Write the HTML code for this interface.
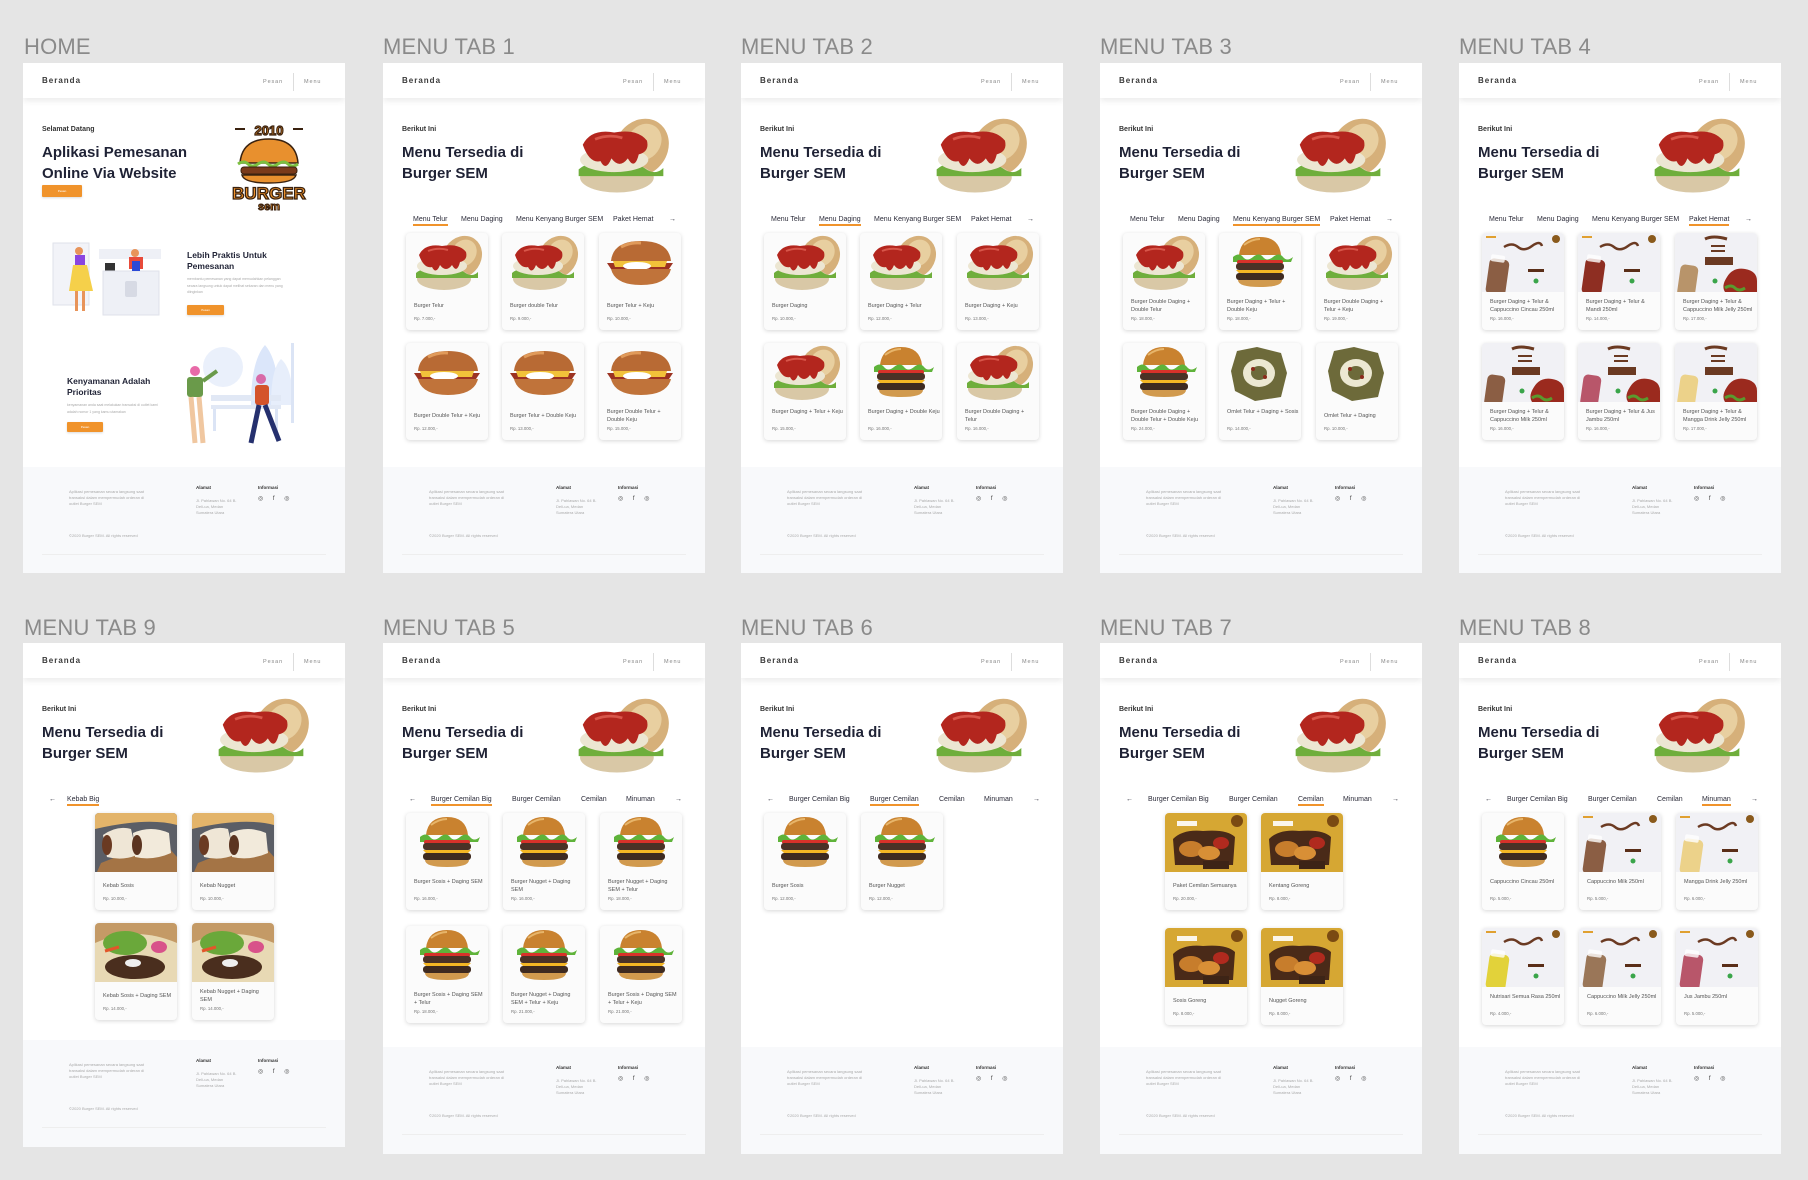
<!DOCTYPE html>
<html><head><meta charset="utf-8"><style>
*{box-sizing:border-box}
body{margin:0;width:1808px;height:1180px;background:#e5e5e5;position:relative;overflow:hidden;font-family:"Liberation Sans",sans-serif}
.t{position:absolute;font-size:22px;color:#8a8a8a;line-height:22px;letter-spacing:.2px}
.f{position:absolute;width:322px;height:510px;background:#fff;overflow:hidden}
.f *{position:absolute;margin:0}
.hdr{left:0;top:0;width:322px;height:35px;background:#fff;box-shadow:0 3px 6px rgba(0,0,0,.08);z-index:2}
.br{left:19px;top:13px;font-size:8px;font-weight:bold;letter-spacing:1px;color:#3a3a3a}
.ps{left:240px;top:16px;font-size:5.5px;letter-spacing:.9px;color:#888}
.dv{left:270px;top:10px;width:1px;height:18px;background:#ddd}
.mn{left:281px;top:16px;font-size:5.5px;letter-spacing:.9px;color:#888}
.sub{left:19px;top:63px;font-size:7px;font-weight:bold;color:#333}
.h1{left:19px;top:79px;font-size:15px;font-weight:bold;line-height:21px;color:#1f2235;white-space:nowrap}
.hero{left:182px;top:48px;width:112px;height:88px}
.tb{top:153px;font-size:7px;color:#2c2c3a;white-space:nowrap}
.on{border-bottom:2px solid #f0932b;padding-bottom:1px}
.c{width:82px;height:97px;background:#fbfbfb;border-radius:4px;box-shadow:0 1px 4px rgba(0,0,0,.16);overflow:hidden}
.c svg{left:0;top:0;width:82px;height:59px}
.c .n{position:absolute;left:8px;top:66px;width:72px;font-size:5.5px;line-height:7.5px;color:#555}
.c .p{position:absolute;left:8px;top:83px;font-size:4.3px;color:#777}
.c .n.one{top:70px}
.ft{left:0;top:404px;width:322px;height:120px;background:#f8f9fb}
.ft p{font-size:4px;color:#aaa;line-height:6px}
.fd{left:46px;top:22px;width:84px}
.fa{left:173px;top:18px;font-size:4.5px !important;font-weight:bold;color:#333 !important}
.fi{left:235px;top:18px;font-size:4.5px !important;font-weight:bold;color:#333 !important}
.ic{left:235px;top:28px;font-size:6px;color:#444;letter-spacing:4px;white-space:nowrap}
.fl{left:19px;top:87px;width:284px;height:1px;background:#eee}
.btn{background:#f0932b;border-radius:1px;box-shadow:0 1px 2px rgba(0,0,0,.15);color:#fff;font-size:3px;text-align:center;line-height:12px}
</style></head><body>
<svg width="0" height="0" style="position:absolute">
<defs>
<symbol id="s1" viewBox="0 0 82 59">
<ellipse cx="56" cy="24" rx="19" ry="22" fill="#d6b07a" transform="rotate(35 56 24)"/>
<ellipse cx="58" cy="20" rx="12" ry="14" fill="#e8cfa0" transform="rotate(35 58 20)"/>
<ellipse cx="38" cy="46" rx="27" ry="11" fill="#d9c8a6"/>
<path d="M10 40q8-7 16-1t16 0t16 0t14 0l0 6l-62 0z" fill="#6fae3c"/>
<ellipse cx="36" cy="33" rx="25" ry="9" fill="#ece6d2"/>
<path d="M13 22q6-12 23-9q17-3 24 6q2 8-6 10q-3 12-8 3q-6 8-12 0q-4 10-8 2q-8 2-13-12z" fill="#b3261e"/>
<path d="M22 18q10-4 20-1" stroke="#d8564a" stroke-width="2" fill="none"/>
</symbol>
<symbol id="s2" viewBox="0 0 82 59">
<path d="M20 22q2-18 21-18t21 18z" fill="#c9822f"/>
<path d="M25 12q8-6 16-6" stroke="#e7b56a" stroke-width="2" fill="none"/>
<path d="M14 24q6-5 10 0t10 0t10 0t10 0t10 0t10 0l-2 5l-58 0z" fill="#5fb33a"/>
<rect x="18" y="27" width="46" height="4" rx="2" fill="#d8322a"/>
<rect x="17" y="30" width="48" height="7" rx="3" fill="#4a3226"/>
<path d="M17 37l48 0l-4 4l-40 0z" fill="#f4b624"/>
<rect x="17" y="40" width="48" height="7" rx="3" fill="#3e2a20"/>
<path d="M19 47l44 0q0 7-22 7t-22-7z" fill="#d19a4e"/>
</symbol>
<symbol id="s3" viewBox="0 0 82 59">
<rect width="82" height="59" fill="#f1f1f5"/>
<rect x="4" y="3" width="10" height="2" fill="#e0a030"/>
<circle cx="74" cy="6" r="4" fill="#8a5a1c"/>
<path d="M22 14q8-5 14 0t14-1t10 0" stroke="#6b3a22" stroke-width="2.5" fill="none"/>
<rect x="6" y="26" width="20" height="36" rx="5" fill="currentColor" transform="rotate(8 16 40)"/>
<rect x="9" y="22" width="14" height="7" rx="2" fill="#fff" opacity=".8" transform="rotate(8 16 25)"/>
<rect x="46" y="36" width="16" height="3" fill="#5a2e18"/>
<circle cx="54" cy="48" r="2.5" fill="#3aa54a"/>
</symbol>
<symbol id="s3b" viewBox="0 0 82 59">
<rect width="82" height="59" fill="#f1f1f5"/>
<path d="M30 6q8-4 22 0" stroke="#6b3a22" stroke-width="3" fill="none"/>
<rect x="36" y="12" width="14" height="2" fill="#6b3a22"/>
<rect x="36" y="17" width="14" height="2" fill="#6b3a22"/>
<rect x="30" y="24" width="28" height="8" fill="#6b3a22"/>
<rect x="4" y="32" width="18" height="32" rx="5" fill="currentColor" transform="rotate(8 13 46)"/>
<path d="M52 44q6-10 18-8q12 2 12 12l0 11l-32 0q-4-6 2-15z" fill="#9b2a1e"/>
<path d="M50 55q6-4 10 0t10 0" stroke="#5a9a2e" stroke-width="3" fill="none"/>
<circle cx="40" cy="48" r="2.5" fill="#3aa54a"/>
</symbol>
<symbol id="s4" viewBox="0 0 82 59">
<rect width="82" height="59" fill="#d6a733"/>
<circle cx="72" cy="8" r="6" fill="#7a4a12"/>
<rect x="12" y="8" width="20" height="5" fill="#fff" opacity=".9"/>
<path d="M8 26q10-10 30-8q24-2 32 6l-2 28l-58 0z" fill="#4a2a18"/>
<ellipse cx="26" cy="36" rx="12" ry="8" fill="#c77d2c"/>
<ellipse cx="44" cy="40" rx="11" ry="7" fill="#d88f36"/>
<ellipse cx="56" cy="30" rx="8" ry="6" fill="#b02a1e"/>
<rect x="38" y="48" width="26" height="8" fill="#3d2416"/>
</symbol>
<symbol id="s5" viewBox="0 0 82 59">
<rect width="82" height="59" fill="#5b5e66"/>
<path d="M0 0l82 0l0 12q-30-8-82 4z" fill="#e3b46a"/>
<path d="M6 50l60-24l16 18l0 15l-80 0z" fill="#a47445"/>
<path d="M8 22q14-10 28-6l6 26q-14 6-30 2z" fill="#efe6d6"/>
<ellipse cx="12" cy="32" rx="5" ry="10" fill="#6a3a22"/>
<path d="M38 20q18-8 36 0l2 20q-18 8-36 4z" fill="#f2eadb"/>
<ellipse cx="42" cy="32" rx="5" ry="10" fill="#5b3420"/>
</symbol>
<symbol id="s5b" viewBox="0 0 82 59">
<rect width="82" height="59" fill="#c49a66"/>
<path d="M0 20q40-18 82 0l0 39l-82 0z" fill="#e8d9b4"/>
<ellipse cx="30" cy="20" rx="22" ry="12" fill="#6aa83a"/>
<ellipse cx="40" cy="44" rx="30" ry="12" fill="#4a2e1e"/>
<ellipse cx="38" cy="40" rx="8" ry="4" fill="#eee"/>
<path d="M10 28l14-4" stroke="#e2562a" stroke-width="3"/>
<ellipse cx="64" cy="24" rx="8" ry="6" fill="#d8528a"/>
</symbol>
<symbol id="s6" viewBox="0 0 82 59">
<path d="M12 28q2-20 30-20t30 20z" fill="#b86a34"/>
<path d="M22 14q10-5 20-4" stroke="#e09a5a" stroke-width="3" fill="none"/>
<path d="M8 30l66 0l-4 6l-58 0z" fill="#9c3322"/>
<path d="M14 28l54 0l-2 6l-50 0z" fill="#f2c23a"/>
<ellipse cx="38" cy="33" rx="14" ry="4" fill="#fff"/>
<path d="M12 36l60 0q-4 16-30 16t-30-16z" fill="#c0733a"/>
</symbol>
<symbol id="s7" viewBox="0 0 82 59">
<path d="M18 8l20-4l24 6l6 20l-6 24l-26 4l-20-10l-4-20z" fill="#6d6a3a"/>
<ellipse cx="40" cy="30" rx="16" ry="14" fill="#ece8d2"/>
<ellipse cx="40" cy="30" rx="8" ry="7" fill="#6d6a3a"/>
<circle cx="34" cy="26" r="2" fill="#8b2a1a"/><circle cx="46" cy="34" r="2" fill="#8b2a1a"/>
</symbol>
</defs></svg>

<div class="t" style="left:24px;top:36px">HOME</div>
<div class="t" style="left:383px;top:36px">MENU TAB 1</div>
<div class="t" style="left:741px;top:36px">MENU TAB 2</div>
<div class="t" style="left:1100px;top:36px">MENU TAB 3</div>
<div class="t" style="left:1459px;top:36px">MENU TAB 4</div>
<div class="t" style="left:24px;top:617px">MENU TAB 9</div>
<div class="t" style="left:383px;top:617px">MENU TAB 5</div>
<div class="t" style="left:741px;top:617px">MENU TAB 6</div>
<div class="t" style="left:1100px;top:617px">MENU TAB 7</div>
<div class="t" style="left:1459px;top:617px">MENU TAB 8</div>

<!-- HOME -->
<div class="f" style="left:23px;top:63px">
<div class="hdr"><span class="br">Beranda</span><span class="ps">Pesan</span><span class="dv"></span><span class="mn">Menu</span></div>
<p class="sub">Selamat Datang</p>
<p class="h1">Aplikasi Pemesanan<br>Online Via Website</p>
<div class="btn" style="left:19px;top:122px;width:40px;height:12px">Pesan</div>
<svg style="left:206px;top:58px;width:80px;height:90px" viewBox="0 0 80 90">
<text x="40" y="14" text-anchor="middle" font-family="Liberation Sans" font-weight="bold" font-size="13" fill="#f0932b" stroke="#3a2210" stroke-width="1.2">2010</text>
<rect x="6" y="7" width="10" height="2" fill="#3a2210"/><rect x="64" y="7" width="10" height="2" fill="#3a2210"/>
<path d="M11 42q2-24 29-24t29 24z" fill="#e8902e" stroke="#3a2210" stroke-width="1.5"/>
<path d="M9 43q6-4 10 0t10 0t10 0t10 0t10 0t10 0" stroke="#7cc040" stroke-width="3" fill="none"/>
<rect x="12" y="46" width="56" height="7" rx="3" fill="#7a3a1a" stroke="#3a2210"/>
<path d="M13 54l54 0q-2 8-27 8t-27-8z" fill="#e8902e" stroke="#3a2210" stroke-width="1.5"/>
<text x="40" y="78" text-anchor="middle" font-family="Liberation Sans" font-weight="bold" font-size="17" fill="#f0932b" stroke="#3a2210" stroke-width="1.3">BURGER</text>
<text x="40" y="89" text-anchor="middle" font-family="Liberation Sans" font-weight="bold" font-size="11" fill="#f0932b" stroke="#3a2210" stroke-width="1">sem</text>
</svg>
<svg style="left:28px;top:178px;width:112px;height:78px" viewBox="0 0 112 78">
<rect x="2" y="2" width="36" height="62" fill="#f2f3f8" stroke="#dfe1ea"/>
<rect x="48" y="8" width="62" height="10" fill="#eef0f6"/>
<rect x="54" y="22" width="10" height="8" fill="#333"/>
<path d="M52 30l56 0l0 44l-56 0z" fill="#eef0f6" stroke="#dfe1ea"/>
<rect x="74" y="40" width="12" height="16" rx="2" fill="#d7dae4"/>
<circle cx="28" cy="10" r="4" fill="#e8945a"/>
<rect x="24" y="14" width="10" height="10" fill="#8a45e0"/>
<path d="M22 24l14 0l6 26l-24 0z" fill="#f5d04a"/>
<rect x="24" y="50" width="3" height="20" fill="#e8945a"/><rect x="31" y="50" width="3" height="20" fill="#e8945a"/>
<circle cx="84" cy="12" r="4" fill="#e8945a"/>
<rect x="78" y="16" width="14" height="12" fill="#e84b3a"/>
<rect x="81" y="20" width="8" height="10" fill="#2b49d6"/>
</svg>
<p style="left:164px;top:187px;font-size:8.5px;font-weight:bold;color:#1f2235;line-height:11px">Lebih Praktis Untuk<br>Pemesanan</p>
<p style="left:164px;top:213px;width:105px;font-size:3.5px;color:#aaa;line-height:6.5px">membantu pemesanan yang dapat memudahkan pelanggan secara langsung untuk dapat melihat sekaran dan menu yang diinginkan</p>
<div class="btn" style="left:164px;top:242px;width:37px;height:10px;line-height:10px">Pesan</div>
<p style="left:44px;top:313px;font-size:8.5px;font-weight:bold;color:#1f2235;line-height:11px">Kenyamanan Adalah<br>Prioritas</p>
<p style="left:44px;top:339px;width:100px;font-size:3.5px;color:#aaa;line-height:6.5px">kenyamanan anda saat melakukan transaksi di outlet kami adalah nomor 1 yang kamu utamakan</p>
<div class="btn" style="left:44px;top:359px;width:36px;height:10px;line-height:10px">Pesan</div>
<svg style="left:160px;top:276px;width:116px;height:110px" viewBox="0 0 116 110">
<circle cx="40" cy="28" r="20" fill="#eaf0fb"/>
<path d="M82 6q14 16 14 60l-28 0q0-44 14-60z" fill="#dbe6fa"/>
<path d="M98 20q12 10 12 46l-22 0q0-36 10-46z" fill="#e7eefb"/>
<rect x="108" y="4" width="3" height="80" fill="#dbe4f5"/>
<rect x="28" y="56" width="70" height="6" fill="#e1e8f5"/>
<rect x="28" y="66" width="70" height="4" fill="#e1e8f5"/>
<rect x="30" y="70" width="3" height="22" fill="#dbe4f5"/><rect x="92" y="70" width="3" height="22" fill="#dbe4f5"/>
<circle cx="12" cy="32" r="5" fill="#e86aa8"/>
<rect x="4" y="38" width="16" height="20" rx="3" fill="#6a9a4a"/>
<path d="M20 42l14-10" stroke="#6a9a4a" stroke-width="4"/>
<path d="M8 58l4 46M16 58l4 46" stroke="#f0c7a0" stroke-width="5"/>
<circle cx="78" cy="40" r="5" fill="#d86aa8"/>
<rect x="72" y="46" width="14" height="20" rx="3" fill="#d4532a"/>
<path d="M76 66l-8 38M82 66l14 36" stroke="#25306e" stroke-width="5"/>
</svg>
<div class="ft"><p class="fd">Aplikasi pemesanan secara langsung saat transaksi dalam mempermudah orderan di outlet Burger SEM</p><p class="fa">Alamat</p><p style="left:173px;top:31px">Jl. Pahlawan No. 64 B.<br>Deli-ua, Medan<br>Sumatera Utara</p><p class="fi">Informasi</p><span class="ic">◎ f ◎</span><p style="left:46px;top:66px">©2020 Burger SEM. All rights reserved</p><span class="fl"></span></div>
</div>

<!-- MENU TAB 1 -->
<div class="f" style="left:383px;top:63px">
<div class="hdr"><span class="br">Beranda</span><span class="ps">Pesan</span><span class="dv"></span><span class="mn">Menu</span></div>
<p class="sub">Berikut Ini</p><p class="h1">Menu Tersedia di<br>Burger SEM</p>
<svg class="hero" viewBox="0 0 82 59"><use href="#s1"/></svg>
<span class="tb on" style="left:30px">Menu Telur</span><span class="tb" style="left:78px">Menu Daging</span><span class="tb" style="left:133px">Menu Kenyang Burger SEM</span><span class="tb" style="left:230px">Paket Hemat</span><span class="tb" style="left:286px">→</span>
<div class="c" style="left:23px;top:170px"><svg viewBox="0 0 82 59"><use href="#s1"/></svg><p class="n one">Burger Telur</p><p class="p">Rp. 7.000,-</p></div>
<div class="c" style="left:119px;top:170px"><svg viewBox="0 0 82 59"><use href="#s1"/></svg><p class="n one">Burger double Telur</p><p class="p">Rp. 9.000,-</p></div>
<div class="c" style="left:216px;top:170px"><svg viewBox="0 0 82 59"><use href="#s6"/></svg><p class="n one">Burger Telur + Keju</p><p class="p">Rp. 10.000,-</p></div>
<div class="c" style="left:23px;top:280px"><svg viewBox="0 0 82 59"><use href="#s6"/></svg><p class="n one">Burger Double Telur + Keju</p><p class="p">Rp. 12.000,-</p></div>
<div class="c" style="left:119px;top:280px"><svg viewBox="0 0 82 59"><use href="#s6"/></svg><p class="n one">Burger Telur + Double Keju</p><p class="p">Rp. 13.000,-</p></div>
<div class="c" style="left:216px;top:280px"><svg viewBox="0 0 82 59"><use href="#s6"/></svg><p class="n">Burger Double Telur + Double Keju</p><p class="p">Rp. 15.000,-</p></div>
<div class="ft"><p class="fd">Aplikasi pemesanan secara langsung saat transaksi dalam mempermudah orderan di outlet Burger SEM</p><p class="fa">Alamat</p><p style="left:173px;top:31px">Jl. Pahlawan No. 64 B.<br>Deli-ua, Medan<br>Sumatera Utara</p><p class="fi">Informasi</p><span class="ic">◎ f ◎</span><p style="left:46px;top:66px">©2020 Burger SEM. All rights reserved</p><span class="fl"></span></div>
</div>

<!-- MENU TAB 2 -->
<div class="f" style="left:741px;top:63px">
<div class="hdr"><span class="br">Beranda</span><span class="ps">Pesan</span><span class="dv"></span><span class="mn">Menu</span></div>
<p class="sub">Berikut Ini</p><p class="h1">Menu Tersedia di<br>Burger SEM</p>
<svg class="hero" viewBox="0 0 82 59"><use href="#s1"/></svg>
<span class="tb" style="left:30px">Menu Telur</span><span class="tb on" style="left:78px">Menu Daging</span><span class="tb" style="left:133px">Menu Kenyang Burger SEM</span><span class="tb" style="left:230px">Paket Hemat</span><span class="tb" style="left:286px">→</span>
<div class="c" style="left:23px;top:170px"><svg viewBox="0 0 82 59"><use href="#s1"/></svg><p class="n one">Burger Daging</p><p class="p">Rp. 10.000,-</p></div>
<div class="c" style="left:119px;top:170px"><svg viewBox="0 0 82 59"><use href="#s1"/></svg><p class="n one">Burger Daging + Telur</p><p class="p">Rp. 12.000,-</p></div>
<div class="c" style="left:216px;top:170px"><svg viewBox="0 0 82 59"><use href="#s1"/></svg><p class="n one">Burger Daging + Keju</p><p class="p">Rp. 13.000,-</p></div>
<div class="c" style="left:23px;top:280px"><svg viewBox="0 0 82 59"><use href="#s1"/></svg><p class="n">Burger Daging + Telur + Keju</p><p class="p">Rp. 15.000,-</p></div>
<div class="c" style="left:119px;top:280px"><svg viewBox="0 0 82 59"><use href="#s2"/></svg><p class="n">Burger Daging + Double Keju</p><p class="p">Rp. 16.000,-</p></div>
<div class="c" style="left:216px;top:280px"><svg viewBox="0 0 82 59"><use href="#s1"/></svg><p class="n">Burger Double Daging + Telur</p><p class="p">Rp. 16.000,-</p></div>
<div class="ft"><p class="fd">Aplikasi pemesanan secara langsung saat transaksi dalam mempermudah orderan di outlet Burger SEM</p><p class="fa">Alamat</p><p style="left:173px;top:31px">Jl. Pahlawan No. 64 B.<br>Deli-ua, Medan<br>Sumatera Utara</p><p class="fi">Informasi</p><span class="ic">◎ f ◎</span><p style="left:46px;top:66px">©2020 Burger SEM. All rights reserved</p><span class="fl"></span></div>
</div>

<!-- MENU TAB 3 -->
<div class="f" style="left:1100px;top:63px">
<div class="hdr"><span class="br">Beranda</span><span class="ps">Pesan</span><span class="dv"></span><span class="mn">Menu</span></div>
<p class="sub">Berikut Ini</p><p class="h1">Menu Tersedia di<br>Burger SEM</p>
<svg class="hero" viewBox="0 0 82 59"><use href="#s1"/></svg>
<span class="tb" style="left:30px">Menu Telur</span><span class="tb" style="left:78px">Menu Daging</span><span class="tb on" style="left:133px">Menu Kenyang Burger SEM</span><span class="tb" style="left:230px">Paket Hemat</span><span class="tb" style="left:286px">→</span>
<div class="c" style="left:23px;top:170px"><svg viewBox="0 0 82 59"><use href="#s1"/></svg><p class="n">Burger Double Daging + Double Telur</p><p class="p">Rp. 18.000,-</p></div>
<div class="c" style="left:119px;top:170px"><svg viewBox="0 0 82 59"><use href="#s2"/></svg><p class="n">Burger Daging + Telur + Double Keju</p><p class="p">Rp. 18.000,-</p></div>
<div class="c" style="left:216px;top:170px"><svg viewBox="0 0 82 59"><use href="#s1"/></svg><p class="n">Burger Double Daging + Telur + Keju</p><p class="p">Rp. 19.000,-</p></div>
<div class="c" style="left:23px;top:280px"><svg viewBox="0 0 82 59"><use href="#s2"/></svg><p class="n">Burger Double Daging + Double Telur + Double Keju</p><p class="p">Rp. 24.000,-</p></div>
<div class="c" style="left:119px;top:280px"><svg viewBox="0 0 82 59"><use href="#s7"/></svg><p class="n">Omlet Telur + Daging + Sosis</p><p class="p">Rp. 14.000,-</p></div>
<div class="c" style="left:216px;top:280px"><svg viewBox="0 0 82 59"><use href="#s7"/></svg><p class="n one">Omlet Telur + Daging</p><p class="p">Rp. 10.000,-</p></div>
<div class="ft"><p class="fd">Aplikasi pemesanan secara langsung saat transaksi dalam mempermudah orderan di outlet Burger SEM</p><p class="fa">Alamat</p><p style="left:173px;top:31px">Jl. Pahlawan No. 64 B.<br>Deli-ua, Medan<br>Sumatera Utara</p><p class="fi">Informasi</p><span class="ic">◎ f ◎</span><p style="left:46px;top:66px">©2020 Burger SEM. All rights reserved</p><span class="fl"></span></div>
</div>

<!-- MENU TAB 4 -->
<div class="f" style="left:1459px;top:63px">
<div class="hdr"><span class="br">Beranda</span><span class="ps">Pesan</span><span class="dv"></span><span class="mn">Menu</span></div>
<p class="sub">Berikut Ini</p><p class="h1">Menu Tersedia di<br>Burger SEM</p>
<svg class="hero" viewBox="0 0 82 59"><use href="#s1"/></svg>
<span class="tb" style="left:30px">Menu Telur</span><span class="tb" style="left:78px">Menu Daging</span><span class="tb" style="left:133px">Menu Kenyang Burger SEM</span><span class="tb on" style="left:230px">Paket Hemat</span><span class="tb" style="left:286px">→</span>
<div class="c" style="left:23px;top:170px"><svg viewBox="0 0 82 59" style="color:#8b5e44"><use href="#s3"/></svg><p class="n">Burger Daging + Telur &amp; Cappuccino Cincau 250ml</p><p class="p">Rp. 16.000,-</p></div>
<div class="c" style="left:119px;top:170px"><svg viewBox="0 0 82 59" style="color:#8e2e22"><use href="#s3"/></svg><p class="n">Burger Daging + Telur &amp; Mandi 250ml</p><p class="p">Rp. 14.000,-</p></div>
<div class="c" style="left:216px;top:170px"><svg viewBox="0 0 82 59" style="color:#b8946a"><use href="#s3b"/></svg><p class="n">Burger Daging + Telur &amp; Cappuccino Milk Jelly 250ml</p><p class="p">Rp. 17.000,-</p></div>
<div class="c" style="left:23px;top:280px"><svg viewBox="0 0 82 59" style="color:#8b5e44"><use href="#s3b"/></svg><p class="n">Burger Daging + Telur &amp; Cappuccino Milk 250ml</p><p class="p">Rp. 16.000,-</p></div>
<div class="c" style="left:119px;top:280px"><svg viewBox="0 0 82 59" style="color:#b8566a"><use href="#s3b"/></svg><p class="n">Burger Daging + Telur &amp; Jus Jambu 250ml</p><p class="p">Rp. 16.000,-</p></div>
<div class="c" style="left:216px;top:280px"><svg viewBox="0 0 82 59" style="color:#ecd28a"><use href="#s3b"/></svg><p class="n">Burger Daging + Telur &amp; Mangga Drink Jelly 250ml</p><p class="p">Rp. 17.000,-</p></div>
<div class="ft"><p class="fd">Aplikasi pemesanan secara langsung saat transaksi dalam mempermudah orderan di outlet Burger SEM</p><p class="fa">Alamat</p><p style="left:173px;top:31px">Jl. Pahlawan No. 64 B.<br>Deli-ua, Medan<br>Sumatera Utara</p><p class="fi">Informasi</p><span class="ic">◎ f ◎</span><p style="left:46px;top:66px">©2020 Burger SEM. All rights reserved</p><span class="fl"></span></div>
</div>

<!-- MENU TAB 9 -->
<div class="f" style="left:23px;top:643px;height:504px">
<div class="hdr"><span class="br">Beranda</span><span class="ps">Pesan</span><span class="dv"></span><span class="mn">Menu</span></div>
<p class="sub">Berikut Ini</p><p class="h1">Menu Tersedia di<br>Burger SEM</p>
<svg class="hero" viewBox="0 0 82 59"><use href="#s1"/></svg>
<span class="tb" style="left:26px">←</span><span class="tb on" style="left:44px">Kebab Big</span>
<div class="c" style="left:72px;top:170px"><svg viewBox="0 0 82 59"><use href="#s5"/></svg><p class="n one">Kebab Sosis</p><p class="p">Rp. 10.000,-</p></div>
<div class="c" style="left:169px;top:170px"><svg viewBox="0 0 82 59"><use href="#s5"/></svg><p class="n one">Kebab Nugget</p><p class="p">Rp. 10.000,-</p></div>
<div class="c" style="left:72px;top:280px"><svg viewBox="0 0 82 59"><use href="#s5b"/></svg><p class="n one">Kebab Sosis + Daging SEM</p><p class="p">Rp. 14.000,-</p></div>
<div class="c" style="left:169px;top:280px"><svg viewBox="0 0 82 59"><use href="#s5b"/></svg><p class="n">Kebab Nugget + Daging SEM</p><p class="p">Rp. 14.000,-</p></div>
<div class="ft" style="top:397px"><p class="fd">Aplikasi pemesanan secara langsung saat transaksi dalam mempermudah orderan di outlet Burger SEM</p><p class="fa">Alamat</p><p style="left:173px;top:31px">Jl. Pahlawan No. 64 B.<br>Deli-ua, Medan<br>Sumatera Utara</p><p class="fi">Informasi</p><span class="ic">◎ f ◎</span><p style="left:46px;top:66px">©2020 Burger SEM. All rights reserved</p><span class="fl"></span></div>
</div>

<!-- MENU TAB 5 -->
<div class="f" style="left:383px;top:643px;height:511px">
<div class="hdr"><span class="br">Beranda</span><span class="ps">Pesan</span><span class="dv"></span><span class="mn">Menu</span></div>
<p class="sub">Berikut Ini</p><p class="h1">Menu Tersedia di<br>Burger SEM</p>
<svg class="hero" viewBox="0 0 82 59"><use href="#s1"/></svg>
<span class="tb" style="left:26px">←</span><span class="tb on" style="left:48px">Burger Cemilan Big</span><span class="tb" style="left:129px">Burger Cemilan</span><span class="tb" style="left:198px">Cemilan</span><span class="tb" style="left:243px">Minuman</span><span class="tb" style="left:292px">→</span>
<div class="c" style="left:23px;top:170px"><svg viewBox="0 0 82 59"><use href="#s2"/></svg><p class="n">Burger Sosis + Daging SEM</p><p class="p">Rp. 16.000,-</p></div>
<div class="c" style="left:120px;top:170px"><svg viewBox="0 0 82 59"><use href="#s2"/></svg><p class="n">Burger Nugget + Daging SEM</p><p class="p">Rp. 16.000,-</p></div>
<div class="c" style="left:217px;top:170px"><svg viewBox="0 0 82 59"><use href="#s2"/></svg><p class="n">Burger Nugget + Daging SEM + Telur</p><p class="p">Rp. 18.000,-</p></div>
<div class="c" style="left:23px;top:283px"><svg viewBox="0 0 82 59"><use href="#s2"/></svg><p class="n">Burger Sosis + Daging SEM + Telur</p><p class="p">Rp. 18.000,-</p></div>
<div class="c" style="left:120px;top:283px"><svg viewBox="0 0 82 59"><use href="#s2"/></svg><p class="n">Burger Nugget + Daging SEM + Telur + Keju</p><p class="p">Rp. 21.000,-</p></div>
<div class="c" style="left:217px;top:283px"><svg viewBox="0 0 82 59"><use href="#s2"/></svg><p class="n">Burger Sosis + Daging SEM + Telur + Keju</p><p class="p">Rp. 21.000,-</p></div>
<div class="ft"><p class="fd">Aplikasi pemesanan secara langsung saat transaksi dalam mempermudah orderan di outlet Burger SEM</p><p class="fa">Alamat</p><p style="left:173px;top:31px">Jl. Pahlawan No. 64 B.<br>Deli-ua, Medan<br>Sumatera Utara</p><p class="fi">Informasi</p><span class="ic">◎ f ◎</span><p style="left:46px;top:66px">©2020 Burger SEM. All rights reserved</p><span class="fl"></span></div>
</div>

<!-- MENU TAB 6 -->
<div class="f" style="left:741px;top:643px;height:511px">
<div class="hdr"><span class="br">Beranda</span><span class="ps">Pesan</span><span class="dv"></span><span class="mn">Menu</span></div>
<p class="sub">Berikut Ini</p><p class="h1">Menu Tersedia di<br>Burger SEM</p>
<svg class="hero" viewBox="0 0 82 59"><use href="#s1"/></svg>
<span class="tb" style="left:26px">←</span><span class="tb" style="left:48px">Burger Cemilan Big</span><span class="tb on" style="left:129px">Burger Cemilan</span><span class="tb" style="left:198px">Cemilan</span><span class="tb" style="left:243px">Minuman</span><span class="tb" style="left:292px">→</span>
<div class="c" style="left:23px;top:170px"><svg viewBox="0 0 82 59"><use href="#s2"/></svg><p class="n one">Burger Sosis</p><p class="p">Rp. 12.000,-</p></div>
<div class="c" style="left:120px;top:170px"><svg viewBox="0 0 82 59"><use href="#s2"/></svg><p class="n one">Burger Nugget</p><p class="p">Rp. 12.000,-</p></div>
<div class="ft"><p class="fd">Aplikasi pemesanan secara langsung saat transaksi dalam mempermudah orderan di outlet Burger SEM</p><p class="fa">Alamat</p><p style="left:173px;top:31px">Jl. Pahlawan No. 64 B.<br>Deli-ua, Medan<br>Sumatera Utara</p><p class="fi">Informasi</p><span class="ic">◎ f ◎</span><p style="left:46px;top:66px">©2020 Burger SEM. All rights reserved</p><span class="fl"></span></div>
</div>

<!-- MENU TAB 7 -->
<div class="f" style="left:1100px;top:643px;height:511px">
<div class="hdr"><span class="br">Beranda</span><span class="ps">Pesan</span><span class="dv"></span><span class="mn">Menu</span></div>
<p class="sub">Berikut Ini</p><p class="h1">Menu Tersedia di<br>Burger SEM</p>
<svg class="hero" viewBox="0 0 82 59"><use href="#s1"/></svg>
<span class="tb" style="left:26px">←</span><span class="tb" style="left:48px">Burger Cemilan Big</span><span class="tb" style="left:129px">Burger Cemilan</span><span class="tb on" style="left:198px">Cemilan</span><span class="tb" style="left:243px">Minuman</span><span class="tb" style="left:292px">→</span>
<div class="c" style="left:65px;top:170px"><svg viewBox="0 0 82 59"><use href="#s4"/></svg><p class="n one">Paket Cemilan Semuanya</p><p class="p">Rp. 20.000,-</p></div>
<div class="c" style="left:161px;top:170px"><svg viewBox="0 0 82 59"><use href="#s4"/></svg><p class="n one">Kentang Goreng</p><p class="p">Rp. 8.000,-</p></div>
<div class="c" style="left:65px;top:285px"><svg viewBox="0 0 82 59"><use href="#s4"/></svg><p class="n one">Sosis Goreng</p><p class="p">Rp. 8.000,-</p></div>
<div class="c" style="left:161px;top:285px"><svg viewBox="0 0 82 59"><use href="#s4"/></svg><p class="n one">Nugget Goreng</p><p class="p">Rp. 8.000,-</p></div>
<div class="ft"><p class="fd">Aplikasi pemesanan secara langsung saat transaksi dalam mempermudah orderan di outlet Burger SEM</p><p class="fa">Alamat</p><p style="left:173px;top:31px">Jl. Pahlawan No. 64 B.<br>Deli-ua, Medan<br>Sumatera Utara</p><p class="fi">Informasi</p><span class="ic">◎ f ◎</span><p style="left:46px;top:66px">©2020 Burger SEM. All rights reserved</p><span class="fl"></span></div>
</div>

<!-- MENU TAB 8 -->
<div class="f" style="left:1459px;top:643px;height:511px">
<div class="hdr"><span class="br">Beranda</span><span class="ps">Pesan</span><span class="dv"></span><span class="mn">Menu</span></div>
<p class="sub">Berikut Ini</p><p class="h1">Menu Tersedia di<br>Burger SEM</p>
<svg class="hero" viewBox="0 0 82 59"><use href="#s1"/></svg>
<span class="tb" style="left:26px">←</span><span class="tb" style="left:48px">Burger Cemilan Big</span><span class="tb" style="left:129px">Burger Cemilan</span><span class="tb" style="left:198px">Cemilan</span><span class="tb on" style="left:243px">Minuman</span><span class="tb" style="left:292px">→</span>
<div class="c" style="left:23px;top:170px"><svg viewBox="0 0 82 59"><use href="#s2"/></svg><p class="n">Cappuccino Cincau 250ml</p><p class="p">Rp. 5.000,-</p></div>
<div class="c" style="left:120px;top:170px"><svg viewBox="0 0 82 59" style="color:#8b5e44"><use href="#s3"/></svg><p class="n">Cappuccino Milk 250ml</p><p class="p">Rp. 5.000,-</p></div>
<div class="c" style="left:217px;top:170px"><svg viewBox="0 0 82 59" style="color:#ecd28a"><use href="#s3"/></svg><p class="n">Mangga Drink Jelly 250ml</p><p class="p">Rp. 6.000,-</p></div>
<div class="c" style="left:23px;top:285px"><svg viewBox="0 0 82 59" style="color:#e2d23a"><use href="#s3"/></svg><p class="n">Nutrisari Semua Rasa 250ml</p><p class="p">Rp. 4.000,-</p></div>
<div class="c" style="left:120px;top:285px"><svg viewBox="0 0 82 59" style="color:#9a7658"><use href="#s3"/></svg><p class="n">Cappuccino Milk Jelly 250ml</p><p class="p">Rp. 6.000,-</p></div>
<div class="c" style="left:217px;top:285px"><svg viewBox="0 0 82 59" style="color:#b8566a"><use href="#s3"/></svg><p class="n">Jus Jambu 250ml</p><p class="p">Rp. 5.000,-</p></div>
<div class="ft"><p class="fd">Aplikasi pemesanan secara langsung saat transaksi dalam mempermudah orderan di outlet Burger SEM</p><p class="fa">Alamat</p><p style="left:173px;top:31px">Jl. Pahlawan No. 64 B.<br>Deli-ua, Medan<br>Sumatera Utara</p><p class="fi">Informasi</p><span class="ic">◎ f ◎</span><p style="left:46px;top:66px">©2020 Burger SEM. All rights reserved</p><span class="fl"></span></div>
</div>
</body></html>
